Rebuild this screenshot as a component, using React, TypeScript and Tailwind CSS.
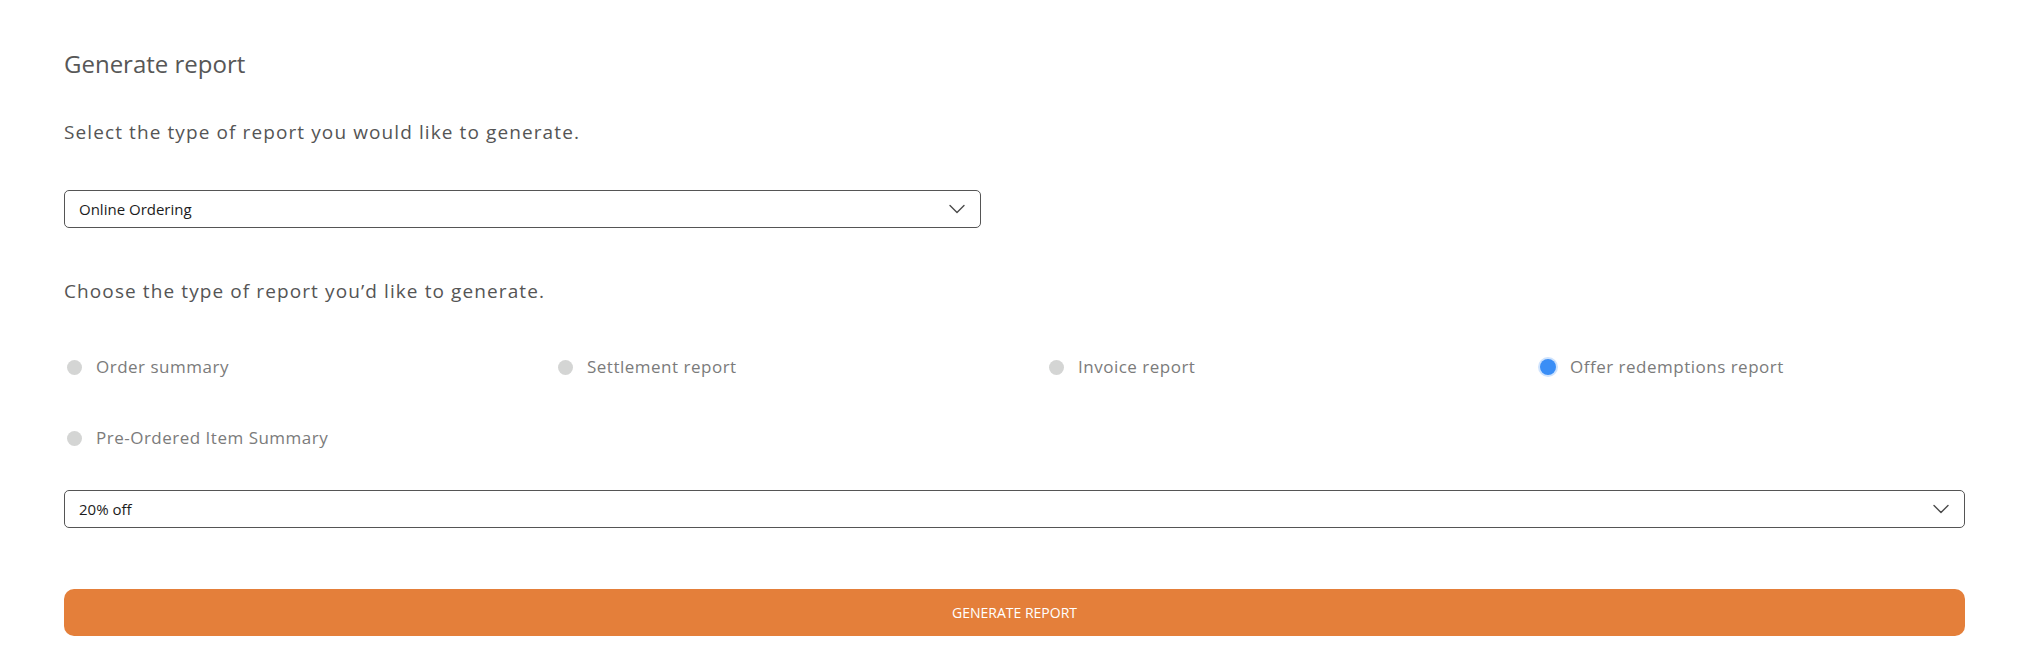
import React, { useState } from 'react';

const reportTypes = [
    'Order summary',
    'Settlement report',
    'Invoice report',
    'Offer redemptions report',
    'Pre-Ordered Item Summary',
];

function Chevron() {
    return (
        <svg width="16" height="10" viewBox="0 0 16 10" fill="none" className="shrink-0">
            <path d="M1 1.5L8 8.5L15 1.5" stroke="#4a4a4a" strokeWidth="1.4" strokeLinecap="round" strokeLinejoin="round" />
        </svg>
    );
}

function SelectBox({ value, className }: { value: string; className?: string }) {
    return (
        <div
            className={`flex h-[38px] items-center justify-between rounded-[5px] border-[1.5px] border-[#555555] bg-white pl-[14px] pr-[15px] ${className ?? ''}`}
        >
            <span className="text-[15px] font-medium text-[#1c1c1c]">{value}</span>
            <Chevron />
        </div>
    );
}

export default function App() {
    const [selected, setSelected] = useState('Offer redemptions report');

    return (
        <div className="min-h-[654px] bg-white pl-[64px] pr-[55px] pt-[50px] font-['Open_Sans',sans-serif]">
            <h1 className="text-[24px] leading-[28px] text-[#575757]">Generate report</h1>

            <p className="mt-[42px] text-[19px] leading-[24px] tracking-[1.1px] text-[#555555]">
                Select the type of report you would like to generate.
            </p>

            <SelectBox value="Online Ordering" className="mt-[46px] w-[917px]" />

            <p className="mt-[51px] text-[19px] leading-[24px] tracking-[1.1px] text-[#555555]">
                Choose the type of report you’d like to generate.
            </p>

            <div className="mt-[52px] grid grid-cols-[repeat(4,491px)] gap-y-[47px]">
                {reportTypes.map((type) => {
                    const active = type === selected;
                    return (
                        <button
                            key={type}
                            onClick={() => setSelected(type)}
                            className="flex h-[24px] items-center gap-[14px] pl-[3px] text-left"
                        >
                            <span
                                className={
                                    active
                                        ? 'h-[16px] w-[16px] rounded-full bg-[#3a8ef6] shadow-[0_0_0_2px_#cfe3fd]'
                                        : 'h-[15px] w-[15px] rounded-full bg-[#d4d5d4]'
                                }
                            />
                            <span className="text-[17px] tracking-[0.5px] text-[#7b7b7b]">{type}</span>
                        </button>
                    );
                })}
            </div>

            <SelectBox value="20% off" className="mt-[40px] w-full" />

            <button className="mt-[61px] flex h-[47px] w-full items-center justify-center rounded-[10px] bg-[#e47f3a] text-[14px] font-medium text-white">
                GENERATE REPORT
            </button>
        </div>
    );
}
